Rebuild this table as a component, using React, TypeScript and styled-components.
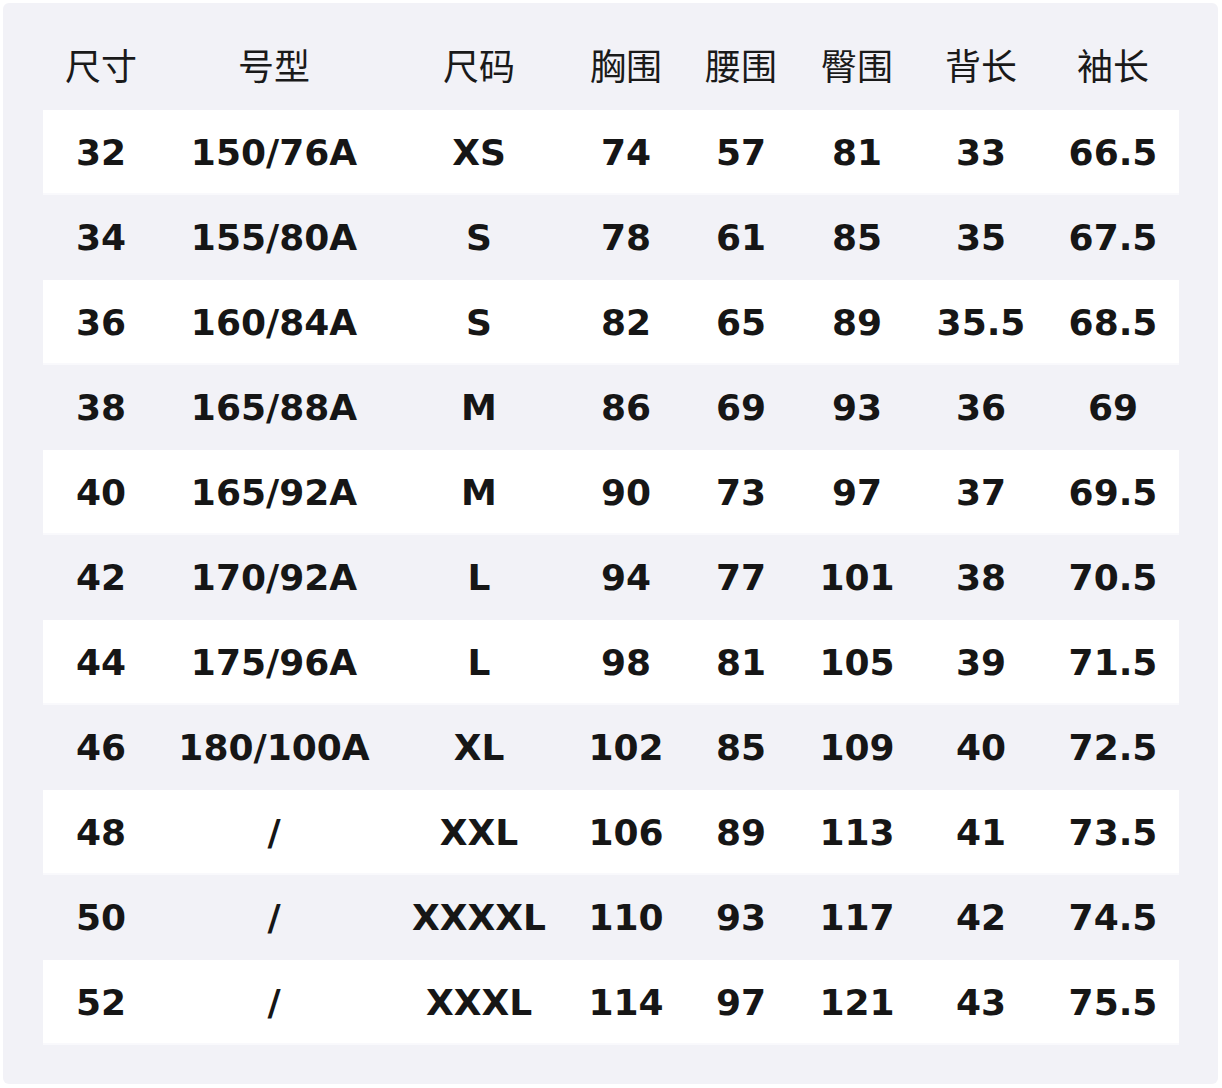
import React from "react";
import styled, { createGlobalStyle } from "styled-components";

const Global = createGlobalStyle`
  html, body { margin: 0; padding: 0; background: #ffffff; }
  body { font-family: "DejaVu Sans", "Noto Sans CJK SC", sans-serif; }
`;

const Page = styled.div`
  width: 1222px;
  height: 1088px;
  padding: 3px 4px 4px 3px;
  box-sizing: border-box;
`;

const Panel = styled.div`
  height: 100%;
  box-sizing: border-box;
  background: #f2f2f7;
  border-radius: 6px;
  padding: 0 39px 0 40px;
`;

const cols = "116px 230px 180px 114px 116px 116px 132px 132px";

const HeaderRow = styled.div`
  display: grid;
  grid-template-columns: ${cols};
  height: 107px;
  align-items: center;
  padding-top: 14px;
  box-sizing: border-box;
`;

const HeadCell = styled.div`
  text-align: center;
  font-family: "Noto Sans CJK SC", "Noto Sans", sans-serif;
  font-size: 36px;
  font-weight: 400;
  color: #1a1a1a;
`;

const Row = styled.div<{ $white: boolean }>`
  display: grid;
  grid-template-columns: ${cols};
  height: 85px;
  align-items: center;
  background: ${(p) => (p.$white ? "#ffffff" : "transparent")};
  box-shadow: ${(p) => (p.$white ? "inset 0 -2px 0 #f9f9fc" : "none")};
`;

const Cell = styled.div`
  text-align: center;
  font-family: "DejaVu Sans", sans-serif;
  font-weight: 700;
  font-size: 36px;
  color: #161616;
`;

const headers = ["尺寸", "号型", "尺码", "胸围", "腰围", "臀围", "背长", "袖长"];

const data: string[][] = [
  ["32", "150/76A", "XS", "74", "57", "81", "33", "66.5"],
  ["34", "155/80A", "S", "78", "61", "85", "35", "67.5"],
  ["36", "160/84A", "S", "82", "65", "89", "35.5", "68.5"],
  ["38", "165/88A", "M", "86", "69", "93", "36", "69"],
  ["40", "165/92A", "M", "90", "73", "97", "37", "69.5"],
  ["42", "170/92A", "L", "94", "77", "101", "38", "70.5"],
  ["44", "175/96A", "L", "98", "81", "105", "39", "71.5"],
  ["46", "180/100A", "XL", "102", "85", "109", "40", "72.5"],
  ["48", "/", "XXL", "106", "89", "113", "41", "73.5"],
  ["50", "/", "XXXXL", "110", "93", "117", "42", "74.5"],
  ["52", "/", "XXXL", "114", "97", "121", "43", "75.5"],
];

export default function App() {
  return (
    <Page>
      <Global />
      <Panel>
        <HeaderRow>
          {headers.map((h) => (
            <HeadCell key={h}>{h}</HeadCell>
          ))}
        </HeaderRow>
        {data.map((r, i) => (
          <Row key={i} $white={i % 2 === 0}>
            {r.map((c, j) => (
              <Cell key={j}>{c}</Cell>
            ))}
          </Row>
        ))}
      </Panel>
    </Page>
  );
}
